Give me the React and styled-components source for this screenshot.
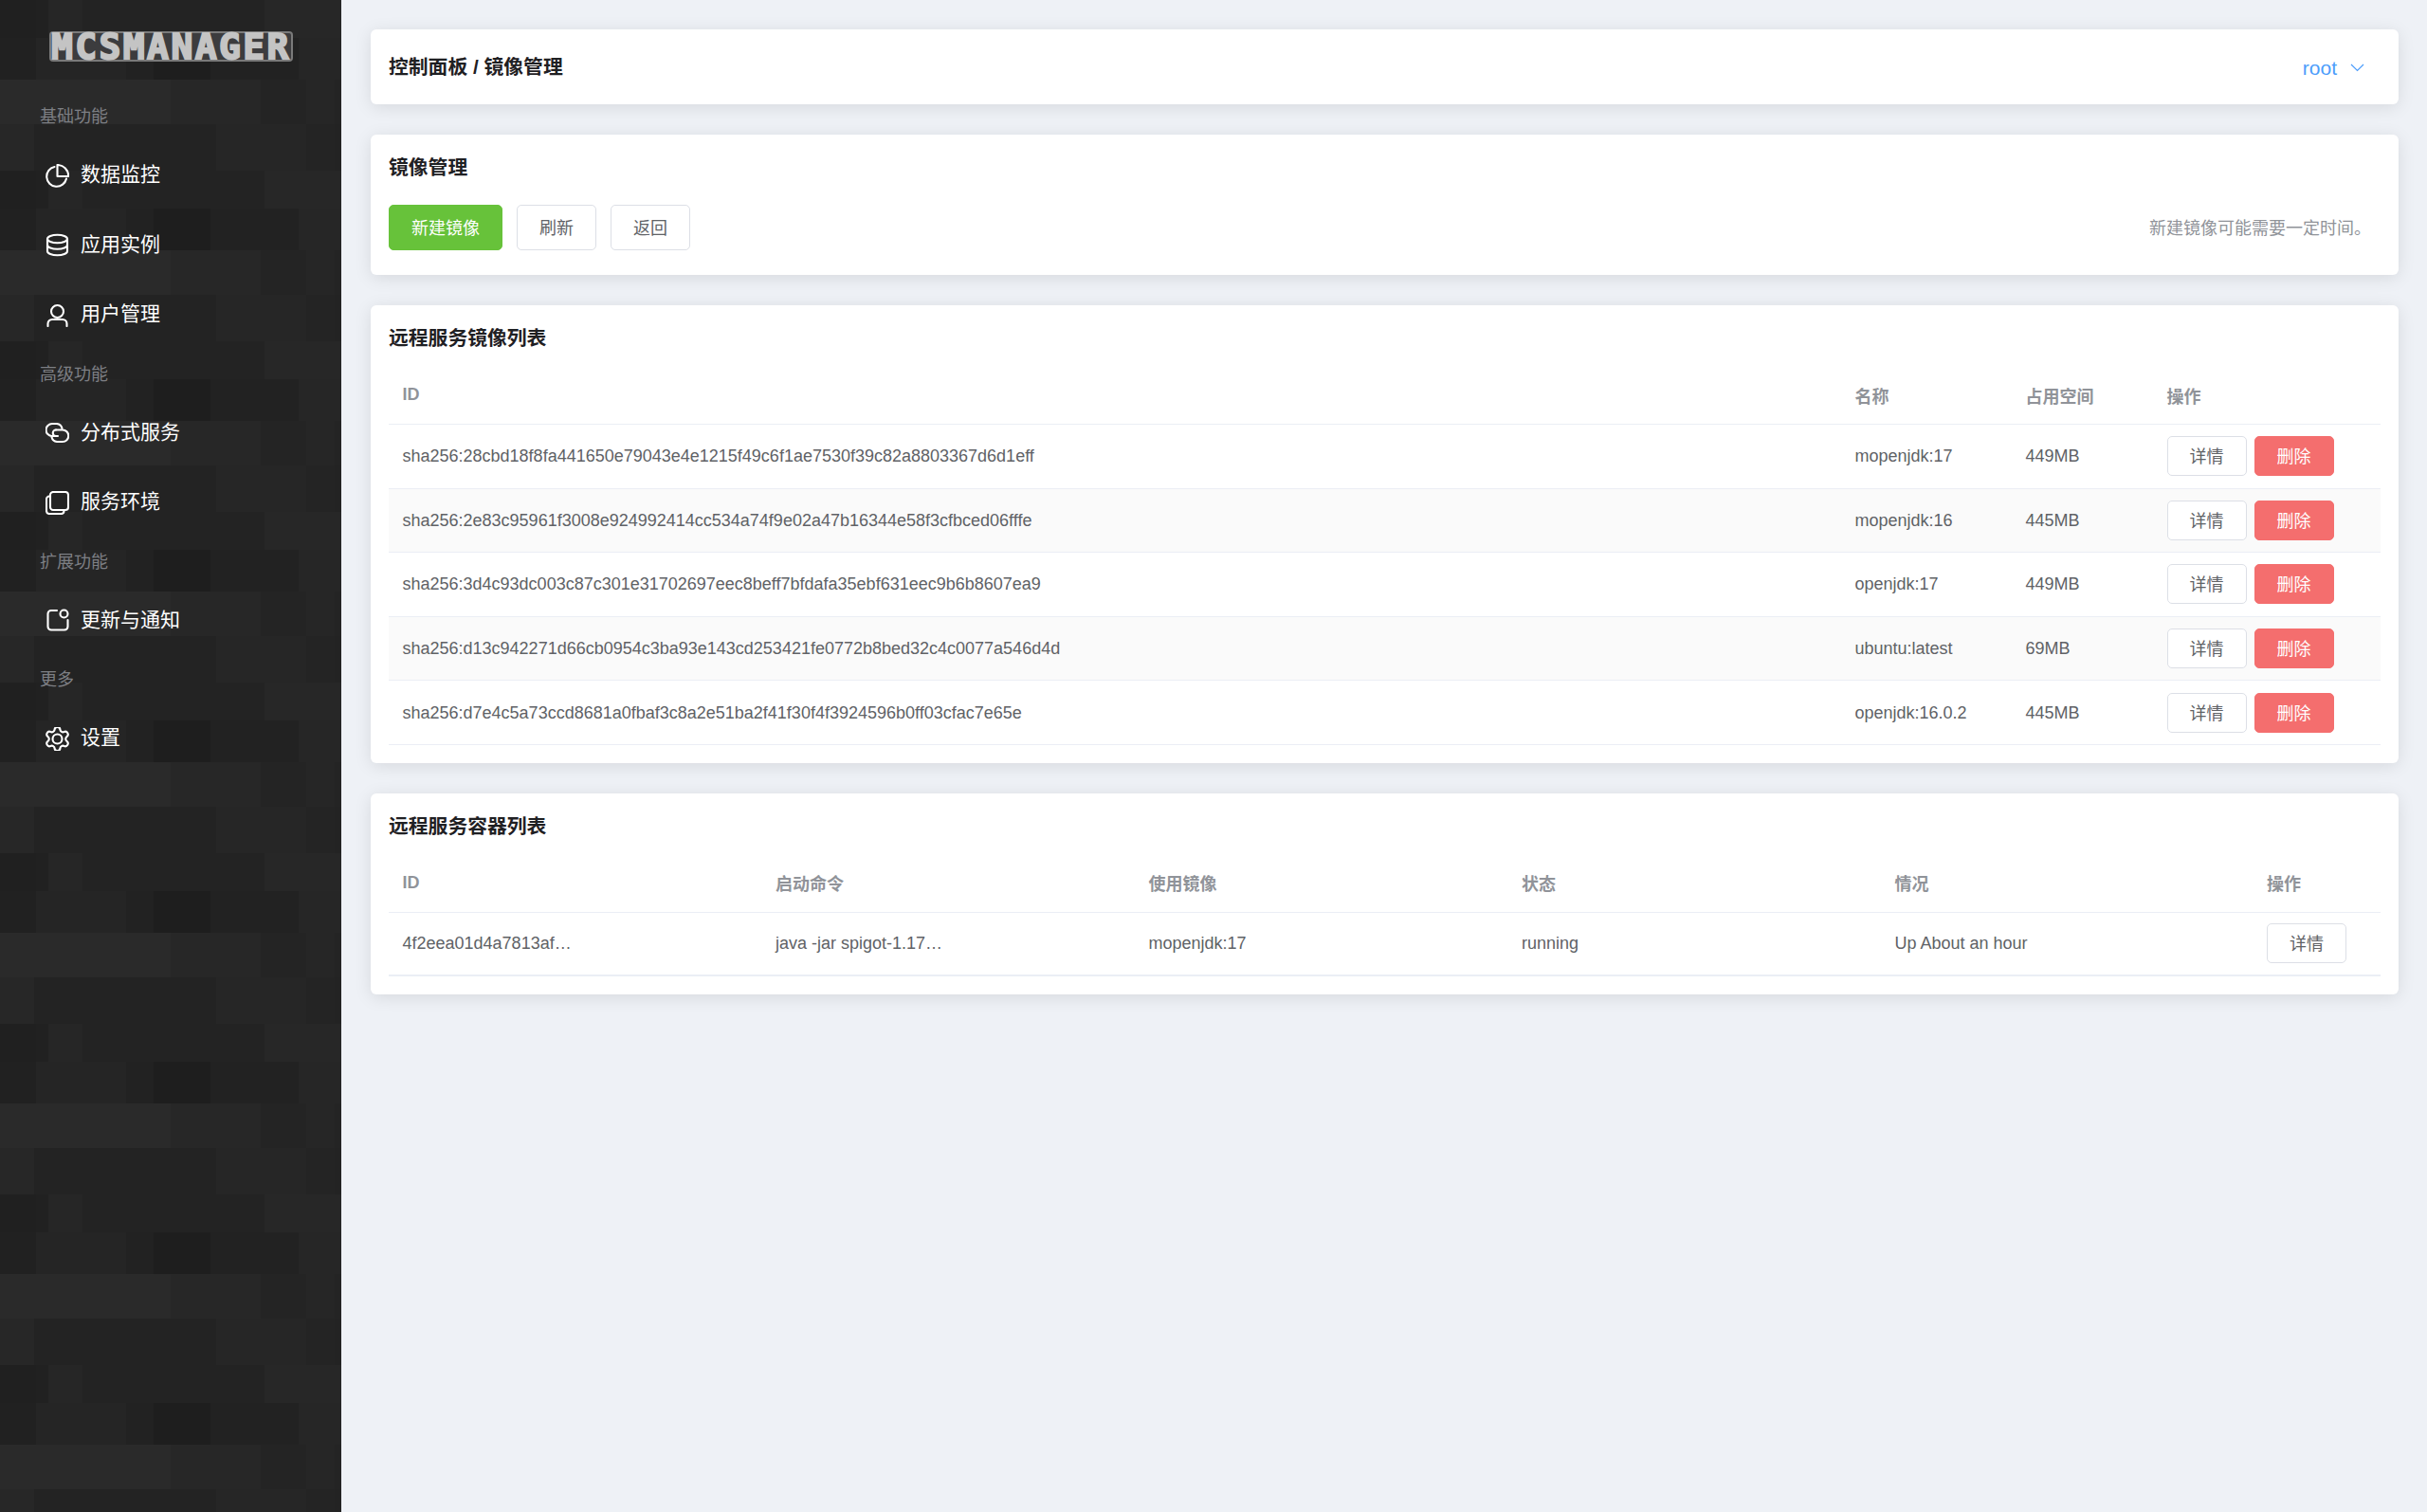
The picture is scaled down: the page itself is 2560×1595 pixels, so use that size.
import React from "react";
import styled, { createGlobalStyle } from "styled-components";

// sidebar tile: four rows of dark blocks, 360x180, repeated down the page
const tileRows = [
  { y: 0, h: 44, blocks: [[0, 38, "#212121"], [38, 95, "#252525"], [133, 29, "#222222"], [162, 60, "#1e1e1e"], [222, 93, "#222222"], [315, 45, "#262626"]] },
  { y: 44, h: 47, blocks: [[0, 180, "#2a2a2a"], [180, 95, "#272727"], [275, 48, "#242424"], [323, 30, "#262626"], [353, 7, "#242424"]] },
  { y: 91, h: 49, blocks: [[0, 36, "#272727"], [36, 192, "#232323"], [228, 95, "#262626"], [323, 30, "#242424"], [353, 7, "#232323"]] },
  { y: 140, h: 40, blocks: [[0, 38, "#202020"], [38, 13, "#212121"], [51, 36, "#262626"], [87, 192, "#232323"], [279, 81, "#272727"]] },
];

const tileSvg = `<svg xmlns="http://www.w3.org/2000/svg" width="360" height="180">${tileRows
  .map((row) =>
    row.blocks
      .map(([x, w, c]) => `<rect x="${x}" y="${row.y}" width="${w}" height="${row.h}" fill="${c}"/>`)
      .join("")
  )
  .join("")}</svg>`;

const GlobalStyle = createGlobalStyle`
  html, body {
    margin: 0;
    padding: 0;
    background: #eef1f6;
  }
  body {
    font-family: "Liberation Sans", "Noto Sans CJK SC", sans-serif;
  }
  * {
    box-sizing: border-box;
  }
`;

const Page = styled.div`
  display: flex;
  min-height: 100vh;
`;

const Sidebar = styled.aside`
  flex: 0 0 360px;
  background-color: #232323;
  background-image: url("data:image/svg+xml,${encodeURIComponent(tileSvg)}");
  background-position: 0 40px;
  background-size: 360px 180px;
`;

const LogoBar = styled.div`
  height: 96px;
  padding: 35px 0 0 54px;
`;

const Logo = styled.div`
  width: 253px;
  height: 28px;
  border-radius: 2px;
  box-shadow: 0 0 0 2px #7a7a7a;
  background: #3c3c3e;
  color: #c4c4c4;
  font-family: "DejaVu Sans Mono", monospace;
  font-weight: bold;
  font-size: 38px;
  line-height: 28px;
  letter-spacing: 2.4px;
  white-space: nowrap;
  -webkit-text-stroke: 2px #c4c4c4;
`;

const SectionLabel = styled.div`
  height: 51px;
  line-height: 51px;
  padding: 2px 0 0 42px;
  font-size: 18px;
  color: #7d7f84;
`;

const MenuItem = styled.div`
  display: flex;
  align-items: center;
  gap: 12px;
  height: 73.5px;
  padding: 0 0 3px 48px;
  font-size: 21px;
  color: #ffffff;
`;

const IconBox = styled.svg`
  flex: none;
  width: 25px;
  height: 25px;
  margin-top: 6px;
  fill: none;
  stroke: #ffffff;
  stroke-width: 2.1;
  stroke-linecap: round;
  stroke-linejoin: round;
`;

const Main = styled.main`
  flex: 1;
  min-width: 0;
  display: flex;
  flex-direction: column;
  gap: 32px;
  padding: 31px 30px 0 31px;
`;

const Card = styled.section`
  background: #ffffff;
  border-radius: 6px;
  padding: 19px;
  box-shadow: 0 3px 18px rgba(0, 0, 0, 0.1);
`;

const TopBar = styled(Card)`
  display: flex;
  align-items: center;
  justify-content: space-between;
  height: 79px;
  padding: 0 36px 0 19px;
`;

const Title = styled.h2`
  margin: 0;
  padding-top: 1px;
  font-size: 20.8px;
  line-height: 30px;
  font-weight: bold;
  color: #1f2023;
`;

const UserMenu = styled.div`
  display: flex;
  align-items: center;
  gap: 14px;
  padding-top: 2px;
  font-size: 21px;
  color: #4c9dfb;
`;

const Chevron = styled.svg`
  width: 15px;
  height: 9px;
  fill: none;
  stroke: #4c9dfb;
  stroke-width: 1.2;
`;

const ActionRow = styled.div`
  display: flex;
  align-items: center;
  justify-content: space-between;
  margin: 24px 0 7px;
`;

const ButtonGroup = styled.div`
  display: flex;
  gap: 15px;
`;

const Button = styled.button`
  height: ${({ $tall }) => ($tall ? "48px" : "42px")};
  width: ${({ $wide }) => ($wide ? "120px" : "84px")};
  padding: 0 0 2px;
  border-radius: 5px;
  border: 1px solid ${({ $kind }) => ($kind === "green" ? "#67c23a" : $kind === "red" ? "#f46e6e" : "#dcdfe6")};
  background: ${({ $kind }) => ($kind === "green" ? "#67c23a" : $kind === "red" ? "#f46e6e" : "#ffffff")};
  color: ${({ $kind }) => ($kind ? "#ffffff" : "#606266")};
  font-family: inherit;
  font-size: 18px;
`;

const Note = styled.span`
  padding: 0 10px 2px 0;
  font-size: 18px;
  color: #909399;
`;

const Table = styled.div`
  margin-top: 14px;
  font-size: 18px;
  color: #606266;
`;

const Row = styled.div`
  display: grid;
  grid-template-columns: ${({ $cols }) => $cols};
  align-items: center;
  height: ${({ $heavy }) => ($heavy ? "67px" : "67.6px")};
  border-bottom: ${({ $heavy }) => ($heavy ? "2px" : "1px")} solid #ebeef5;
  background: ${({ $striped }) => ($striped ? "#fafafa" : "transparent")};
`;

const HeadRow = styled(Row)`
  height: 62px;
  font-weight: bold;
  color: #909399;
`;

const Cell = styled.div`
  padding: ${({ $body }) => ($body ? "1px" : "0")} 0 0 14.5px;
  white-space: nowrap;
`;

const OpsCell = styled(Cell)`
  display: flex;
  gap: 8px;
`;

const PieIcon = () => (
  <IconBox viewBox="0 0 25 25">
    <path d="M9.5 3A10.5 10.5 0 1 0 22 15.5" />
    <path d="M12.5 1V13H24.2A11.8 11.8 0 0 0 12.5 1Z" />
  </IconBox>
);

const CoinIcon = () => (
  <IconBox viewBox="0 0 25 25">
    <ellipse cx="12.5" cy="6" rx="10.5" ry="4.3" />
    <path d="M2 6V19C2 21.4 6.7 23.3 12.5 23.3S23 21.4 23 19V6" />
    <path d="M2 12.5C2 14.9 6.7 16.8 12.5 16.8S23 14.9 23 12.5" />
  </IconBox>
);

const UserIcon = () => (
  <IconBox viewBox="0 0 25 25">
    <circle cx="12.5" cy="8.5" r="6.5" />
    <path d="M2.5 24V21.5A4.5 4.5 0 0 1 7 17H18A4.5 4.5 0 0 1 22.5 21.5V24" />
  </IconBox>
);

const LinkIcon = () => (
  <IconBox viewBox="0 0 25 25">
    <path d="M13 16H7A6.5 6.5 0 0 1 7 3H12A6.5 6.5 0 0 1 17.5 8" />
    <path d="M11 9.5H18A6 6 0 0 1 18 22H12A6.5 6.5 0 0 1 6.5 17" />
    <path d="M11 9.5A3.2 3.2 0 0 0 11 16" />
  </IconBox>
);

const CopyIcon = () => (
  <IconBox viewBox="0 0 25 25">
    <rect x="5" y="1" width="19" height="19" rx="3" />
    <path d="M5 5.5H4A3 3 0 0 0 1 8.5V21A3 3 0 0 0 4 24H16.5A3 3 0 0 0 19.5 21V20" />
  </IconBox>
);

const BellIcon = () => (
  <IconBox viewBox="0 0 25 25">
    <path d="M12 2H6A3.5 3.5 0 0 0 2.5 5.5V19A3.5 3.5 0 0 0 6 22.5H20A3.5 3.5 0 0 0 23.5 19V12" />
    <circle cx="19.5" cy="5.5" r="4" />
  </IconBox>
);

const GearIcon = () => (
  <IconBox viewBox="2 2 20 20" style={{ strokeWidth: 1.7 }}>
    <path d="M9.671 4.136a2.34 2.34 0 0 1 4.659 0 2.34 2.34 0 0 0 3.319 1.915 2.34 2.34 0 0 1 2.33 4.033 2.34 2.34 0 0 0 0 3.831 2.34 2.34 0 0 1-2.33 4.033 2.34 2.34 0 0 0-3.319 1.915 2.34 2.34 0 0 1-4.659 0 2.34 2.34 0 0 0-3.32-1.915 2.34 2.34 0 0 1-2.33-4.033 2.34 2.34 0 0 0 0-3.831A2.34 2.34 0 0 1 6.35 6.051a2.34 2.34 0 0 0 3.319-1.915" />
    <circle cx="12" cy="12" r="4" />
  </IconBox>
);

const menu = [
  { label: "基础功能" },
  { text: "数据监控", icon: <PieIcon /> },
  { text: "应用实例", icon: <CoinIcon /> },
  { text: "用户管理", icon: <UserIcon /> },
  { label: "高级功能" },
  { text: "分布式服务", icon: <LinkIcon /> },
  { text: "服务环境", icon: <CopyIcon /> },
  { label: "扩展功能" },
  { text: "更新与通知", icon: <BellIcon /> },
  { label: "更多" },
  { text: "设置", icon: <GearIcon /> },
];

const images = [
  ["sha256:28cbd18f8fa441650e79043e4e1215f49c6f1ae7530f39c82a8803367d6d1eff", "mopenjdk:17", "449MB"],
  ["sha256:2e83c95961f3008e924992414cc534a74f9e02a47b16344e58f3cfbced06fffe", "mopenjdk:16", "445MB"],
  ["sha256:3d4c93dc003c87c301e31702697eec8beff7bfdafa35ebf631eec9b6b8607ea9", "openjdk:17", "449MB"],
  ["sha256:d13c942271d66cb0954c3ba93e143cd253421fe0772b8bed32c4c0077a546d4d", "ubuntu:latest", "69MB"],
  ["sha256:d7e4c5a73ccd8681a0fbaf3c8a2e51ba2f41f30f4f3924596b0ff03cfac7e65e", "openjdk:16.0.2", "445MB"],
];

const imageCols = "1532px 180px 149px 1fr";
const containerCols = "repeat(4, 393.5px) 392.5px 1fr";

const App = () => (
  <Page>
    <GlobalStyle />
    <Sidebar>
      <LogoBar>
        <Logo>MCSMANAGER</Logo>
      </LogoBar>
      {menu.map((item) =>
        item.label ? (
          <SectionLabel key={item.label}>{item.label}</SectionLabel>
        ) : (
          <MenuItem key={item.text}>
            {item.icon}
            {item.text}
          </MenuItem>
        )
      )}
    </Sidebar>
    <Main>
      <TopBar>
        <Title>控制面板 / 镜像管理</Title>
        <UserMenu>
          root
          <Chevron viewBox="0 0 15 9">
            <path d="M1 1L7.5 7.5L14 1" />
          </Chevron>
        </UserMenu>
      </TopBar>

      <Card>
        <Title>镜像管理</Title>
        <ActionRow>
          <ButtonGroup>
            <Button $tall $wide $kind="green">新建镜像</Button>
            <Button $tall>刷新</Button>
            <Button $tall>返回</Button>
          </ButtonGroup>
          <Note>新建镜像可能需要一定时间。</Note>
        </ActionRow>
      </Card>

      <Card>
        <Title>远程服务镜像列表</Title>
        <Table>
          <HeadRow $cols={imageCols}>
            <Cell>ID</Cell>
            <Cell>名称</Cell>
            <Cell>占用空间</Cell>
            <Cell>操作</Cell>
          </HeadRow>
          {images.map(([id, name, size], idx) => (
            <Row key={id} $cols={imageCols} $striped={idx % 2 === 1}>
              <Cell $body>{id}</Cell>
              <Cell $body>{name}</Cell>
              <Cell $body>{size}</Cell>
              <OpsCell>
                <Button>详情</Button>
                <Button $kind="red">删除</Button>
              </OpsCell>
            </Row>
          ))}
        </Table>
      </Card>

      <Card>
        <Title>远程服务容器列表</Title>
        <Table>
          <HeadRow $cols={containerCols}>
            <Cell>ID</Cell>
            <Cell>启动命令</Cell>
            <Cell>使用镜像</Cell>
            <Cell>状态</Cell>
            <Cell>情况</Cell>
            <Cell>操作</Cell>
          </HeadRow>
          <Row $cols={containerCols} $heavy>
            <Cell $body>4f2eea01d4a7813af…</Cell>
            <Cell $body>java -jar spigot-1.17…</Cell>
            <Cell $body>mopenjdk:17</Cell>
            <Cell $body>running</Cell>
            <Cell $body>Up About an hour</Cell>
            <OpsCell>
              <Button>详情</Button>
            </OpsCell>
          </Row>
        </Table>
      </Card>
    </Main>
  </Page>
);

export default App;
